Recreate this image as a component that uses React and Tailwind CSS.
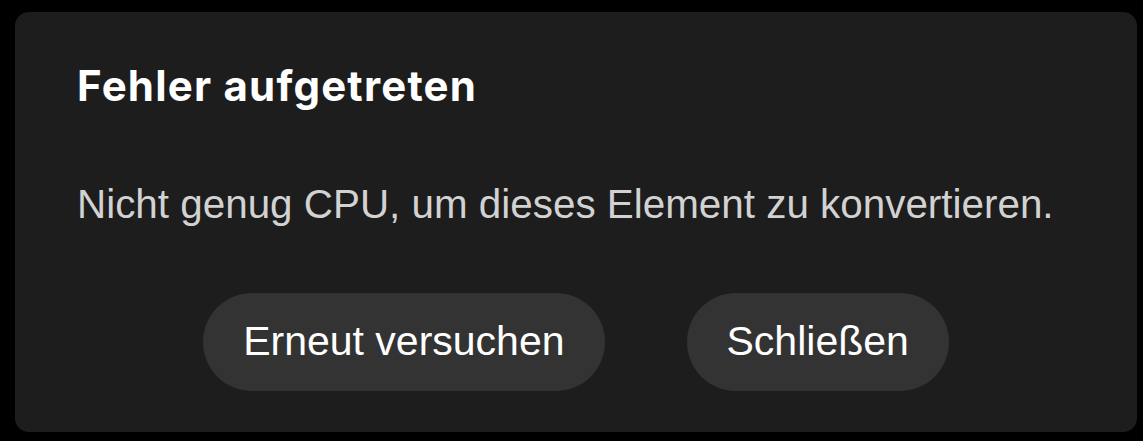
import React from 'react';

const App = () => {
    return (
        <div className="w-[1143px] h-[441px] bg-black pt-[12px] pl-[15px]">
            <div className="w-[1122px] h-[420px] bg-[#1d1d1d] rounded-[14px] flex flex-col pl-[62px] pr-[62px]">
                {/* Header */}
                <h2 className="mt-[50px] text-[42px] leading-[48px] font-bold text-white font-['Inter',sans-serif] tracking-[1.2px]">
                    Fehler aufgetreten
                </h2>

                {/* Message */}
                <p className="mt-[70px] text-[40.4px] leading-[48px] text-[#d2d2d2] font-['Liberation_Sans',Arial,sans-serif]">
                    Nicht genug CPU, um dieses Element zu konvertieren.
                </p>

                {/* Actions */}
                <div className="mt-[65px] flex justify-center gap-[82px] -ml-[62px] -mr-[62px]">
                    <button className="h-[98px] px-[40px] rounded-full bg-[#333333] text-white text-[41px] font-['Liberation_Sans',Arial,sans-serif]">
                        Erneut versuchen
                    </button>
                    <button className="h-[98px] px-[40px] rounded-full bg-[#333333] text-white text-[41px] font-['Liberation_Sans',Arial,sans-serif]">
                        Schließen
                    </button>
                </div>
            </div>
        </div>
    );
};

export default App;
